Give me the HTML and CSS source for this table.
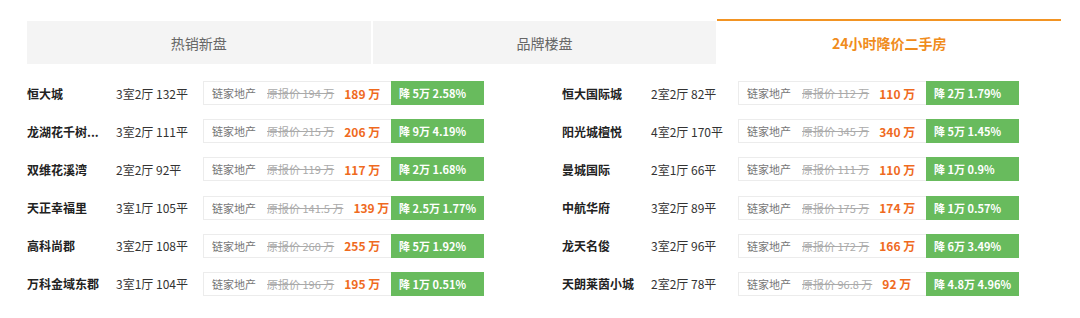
FILE: index.html
```html
<!DOCTYPE html>
<html lang="zh">
<head>
<meta charset="utf-8">
<title>降价房源</title>
<link rel="stylesheet" href="styles.css">
</head>
<body>
<div class="wrap">
  <div class="tabs">
    <div class="tab">热销新盘</div>
    <div class="tab">品牌楼盘</div>
    <div class="tab active">24小时降价二手房</div>
  </div>
  <div class="list">
    <div class="row"><span class="name">恒大城</span><span class="size">3室2厅 132平</span><div class="deal"><span class="src">链家地产</span><span class="orig">原报价 194 万</span><span class="now">189 万</span><span class="drop">降 5万 2.58%</span></div></div>
    <div class="row"><span class="name">恒大国际城</span><span class="size">2室2厅 82平</span><div class="deal"><span class="src">链家地产</span><span class="orig">原报价 112 万</span><span class="now">110 万</span><span class="drop">降 2万 1.79%</span></div></div>
    <div class="row"><span class="name">龙湖花千树...</span><span class="size">3室2厅 111平</span><div class="deal"><span class="src">链家地产</span><span class="orig">原报价 215 万</span><span class="now">206 万</span><span class="drop">降 9万 4.19%</span></div></div>
    <div class="row"><span class="name">阳光城檀悦</span><span class="size">4室2厅 170平</span><div class="deal"><span class="src">链家地产</span><span class="orig">原报价 345 万</span><span class="now">340 万</span><span class="drop">降 5万 1.45%</span></div></div>
    <div class="row"><span class="name">双维花溪湾</span><span class="size">2室2厅 92平</span><div class="deal"><span class="src">链家地产</span><span class="orig">原报价 119 万</span><span class="now">117 万</span><span class="drop">降 2万 1.68%</span></div></div>
    <div class="row"><span class="name">曼城国际</span><span class="size">2室1厅 66平</span><div class="deal"><span class="src">链家地产</span><span class="orig">原报价 111 万</span><span class="now">110 万</span><span class="drop">降 1万 0.9%</span></div></div>
    <div class="row"><span class="name">天正幸福里</span><span class="size">3室1厅 105平</span><div class="deal"><span class="src">链家地产</span><span class="orig">原报价 141.5 万</span><span class="now">139 万</span><span class="drop">降 2.5万 1.77%</span></div></div>
    <div class="row"><span class="name">中航华府</span><span class="size">3室2厅 89平</span><div class="deal"><span class="src">链家地产</span><span class="orig">原报价 175 万</span><span class="now">174 万</span><span class="drop">降 1万 0.57%</span></div></div>
    <div class="row"><span class="name">高科尚郡</span><span class="size">3室2厅 108平</span><div class="deal"><span class="src">链家地产</span><span class="orig">原报价 260 万</span><span class="now">255 万</span><span class="drop">降 5万 1.92%</span></div></div>
    <div class="row"><span class="name">龙天名俊</span><span class="size">3室2厅 96平</span><div class="deal"><span class="src">链家地产</span><span class="orig">原报价 172 万</span><span class="now">166 万</span><span class="drop">降 6万 3.49%</span></div></div>
    <div class="row"><span class="name">万科金域东郡</span><span class="size">3室1厅 104平</span><div class="deal"><span class="src">链家地产</span><span class="orig">原报价 196 万</span><span class="now">195 万</span><span class="drop">降 1万 0.51%</span></div></div>
    <div class="row"><span class="name">天朗莱茵小城</span><span class="size">2室2厅 78平</span><div class="deal"><span class="src">链家地产</span><span class="orig">原报价 96.8 万</span><span class="now">92 万</span><span class="drop">降 4.8万 4.96%</span></div></div>
  </div>
</div>
</body>
</html>
```

FILE: styles.css
```css
html, body {
  margin: 0;
  padding: 0;
  background: #ffffff;
}

body {
  font-family: "Noto Sans CJK SC", "Microsoft YaHei", sans-serif;
  color: #333;
}

.wrap {
  padding: 19px 0 0 27px;
  width: 1034px;
}

.tabs {
  display: flex;
  gap: 1px;
}

.tab {
  flex: 1;
  height: 43px;
  margin-top: 2px;
  background: #f4f4f4;
  color: #666;
  font-size: 14px;
  display: flex;
  align-items: center;
  justify-content: center;
}

.tab + .tab {
  border-left: 1px solid #fff;
}

.tab.active {
  margin-top: 0;
  background: #fff;
  border-top: 2px solid #f29423;
  color: #f08c1c;
  font-weight: bold;
  border-left: none;
}

.list {
  margin-top: 17px;
  display: grid;
  grid-template-columns: 458px 458px;
  column-gap: 77px;
  row-gap: 14.2px;
}

.row {
  display: flex;
  align-items: center;
  height: 24px;
  font-size: 12px;
}

.name {
  width: 89px;
  font-weight: bold;
  color: #222;
  white-space: nowrap;
}

.size {
  width: 87px;
  color: #333;
  white-space: nowrap;
}

.deal {
  display: flex;
  align-items: center;
  height: 24px;
  width: 281px;
  border: 1px solid #ececec;
  box-sizing: border-box;
  padding-left: 8px;
  white-space: nowrap;
}

.src {
  font-size: 11px;
  color: #777;
  margin-right: 11px;
}

.orig {
  font-size: 11px;
  color: #aaa;
  text-decoration: line-through;
  margin-right: 10px;
}

.now {
  font-size: 12px;
  font-weight: bold;
  color: #ef6a1e;
}

.drop {
  margin-left: auto;
  width: 93px;
  height: 24px;
  margin-top: -1px;
  margin-bottom: -1px;
  margin-right: -1px;
  box-sizing: border-box;
  background: #68bb5d;
  color: #fff;
  font-size: 11px;
  font-weight: bold;
  padding-left: 8px;
  display: flex;
  align-items: center;
}
```
